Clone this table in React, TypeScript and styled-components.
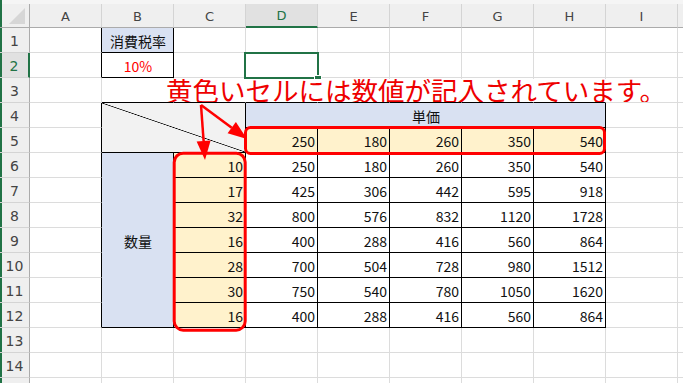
import React from 'react';
import styled, { createGlobalStyle } from 'styled-components';

const GlobalStyle = createGlobalStyle`
  html, body { margin: 0; padding: 0; background: #fff; overflow: hidden; }
  body { font-family: "Noto Sans CJK JP", "Noto Sans", sans-serif; }
  *, *::before, *::after { box-sizing: border-box; }
`;

const GREEN = '#217346';
const BLUE = '#d9e1f2';
const YELLOW = '#fff2cc';
const LIGHTGRAY = '#f2f2f2';
const GRIDLINE = '#dcdcdc';
const HEADER_BG = '#efefef';
const HEADER_ACTIVE_BG = '#e1e1e1';

const Sheet = styled.div`
  position: relative;
  width: 683px;
  height: 383px;
  overflow: hidden;
  background: #fff;
`;

const TopStrip = styled.div`
  height: 4px;
  background: #f5f5f5;
  box-shadow: inset 2px 0 0 ${GREEN};
`;

const Grid = styled.div`
  display: grid;
  grid-template-columns: 30px repeat(10, 72px);
  grid-template-rows: 24px repeat(15, 25px);
`;

const Corner = styled.div`
  display: flex;
  align-items: flex-end;
  justify-content: flex-end;
  padding: 0 4px 3px 0;
  background: ${HEADER_BG};
  border-right: 1px solid #ababab;
  border-bottom: 1px solid #ababab;
  box-shadow: inset 2px 0 0 ${GREEN};
`;

const CornerTriangle = styled.div`
  width: 16px;
  height: 16px;
  background: #d6d6d6;
  clip-path: polygon(100% 0, 100% 100%, 0 100%);
`;

const ColHeader = styled.div<{ $active?: boolean }>`
  display: flex;
  align-items: center;
  justify-content: center;
  padding-top: 1px;
  background: ${(p) => (p.$active ? HEADER_ACTIVE_BG : HEADER_BG)};
  border-right: 1px solid #d4d4d4;
  border-bottom: ${(p) => (p.$active ? `2px solid ${GREEN}` : '1px solid #ababab')};
  color: ${(p) => (p.$active ? GREEN : '#444')};
  font-family: "DejaVu Sans", "Noto Sans", sans-serif;
  font-size: 13px;
`;

const RowHeader = styled.div<{ $active?: boolean }>`
  display: flex;
  align-items: center;
  justify-content: center;
  padding-top: 1px;
  background: ${(p) => (p.$active ? HEADER_ACTIVE_BG : HEADER_BG)};
  border-right: ${(p) => (p.$active ? `2px solid ${GREEN}` : '1px solid #ababab')};
  border-bottom: 1px solid #d4d4d4;
  color: ${(p) => (p.$active ? GREEN : '#444')};
  box-shadow: inset 2px 0 0 ${GREEN};
  font-family: "DejaVu Sans", "Noto Sans", sans-serif;
  font-size: 14px;
`;

const Cell = styled.div<{
  $row: number;
  $col: number;
  $rs: number;
  $cs: number;
  $bg: string;
  $rb: string;
  $bb: string;
  $align: 'flex-start' | 'center' | 'flex-end';
  $color: string;
  $diag?: boolean;
}>`
  grid-row: ${(p) => `${p.$row} / span ${p.$rs}`};
  grid-column: ${(p) => `${p.$col} / span ${p.$cs}`};
  display: flex;
  align-items: center;
  justify-content: ${(p) => p.$align};
  padding: 2px 2px 0 3px;
  background: ${(p) =>
    p.$diag
      ? `linear-gradient(to top right, ${p.$bg} calc(50% - 0.7px), #000 50%, ${p.$bg} calc(50% + 0.7px))`
      : p.$bg};
  border-right: 1px solid ${(p) => p.$rb};
  border-bottom: 1px solid ${(p) => p.$bb};
  color: ${(p) => p.$color};
  font-family: "Noto Sans CJK JP", "Noto Sans", sans-serif;
  font-size: 14px;
  white-space: nowrap;
`;

const Callout = styled.div`
  position: absolute;
  left: 163px;
  top: 79px;
  width: 507px;
  height: 23px;
  padding-left: 3px;
  background: #fff;
  color: #ee0000;
  font-family: "Noto Sans CJK JP", sans-serif;
  font-size: 26.5px;
  line-height: 21px;
  white-space: nowrap;
  overflow: hidden;
`;

const Selection = styled.div`
  position: absolute;
  left: 244px;
  top: 52px;
  width: 75px;
  height: 27px;
  border: 2px solid ${GREEN};
`;

const FillHandle = styled.div`
  position: absolute;
  left: 69px;
  top: 22px;
  width: 6px;
  height: 6px;
  background: ${GREEN};
  box-shadow: 0 0 0 1px #fff;
`;

const Overlay = styled.svg`
  position: absolute;
  left: 0;
  top: 0;
  pointer-events: none;
`;

type Spec = {
  r: number;
  c: number;
  rs?: number;
  cs?: number;
  text?: string;
  bg?: string;
  align?: 'left' | 'center' | 'right';
  color?: string;
  diag?: boolean;
};

const COL_LETTERS = ['A', 'B', 'C', 'D', 'E', 'F', 'G', 'H', 'I', ''];
const ROWS = 15;
const COLS = 10;

const prices = [250, 180, 260, 350, 540];
const qty = [10, 17, 32, 16, 28, 30, 16];
const products = [
  [250, 180, 260, 350, 540],
  [425, 306, 442, 595, 918],
  [800, 576, 832, 1120, 1728],
  [400, 288, 416, 560, 864],
  [700, 504, 728, 980, 1512],
  [750, 540, 780, 1050, 1620],
  [400, 288, 416, 560, 864],
];

function buildSpecs(): Spec[] {
  const specs: Spec[] = [
    { r: 1, c: 2, text: '消費税率', bg: BLUE, align: 'center' },
    { r: 2, c: 2, text: '10%', align: 'center', color: '#ff0000' },
    { r: 4, c: 2, rs: 2, cs: 2, bg: LIGHTGRAY, diag: true },
    { r: 4, c: 4, cs: 5, text: '単価', bg: BLUE, align: 'center' },
    { r: 6, c: 2, rs: 7, text: '数量', bg: BLUE, align: 'center' },
  ];
  prices.forEach((p, i) => specs.push({ r: 5, c: 4 + i, text: String(p), bg: YELLOW, align: 'right' }));
  qty.forEach((q, i) => specs.push({ r: 6 + i, c: 3, text: String(q), bg: YELLOW, align: 'right' }));
  products.forEach((row, i) =>
    row.forEach((v, j) => specs.push({ r: 6 + i, c: 4 + j, text: String(v), align: 'right' }))
  );
  const covered = new Set<string>();
  specs.forEach((s) => {
    for (let r = s.r; r < s.r + (s.rs ?? 1); r++)
      for (let c = s.c; c < s.c + (s.cs ?? 1); c++) covered.add(`${r},${c}`);
  });
  for (let r = 1; r <= ROWS; r++)
    for (let c = 1; c <= COLS; c++) if (!covered.has(`${r},${c}`)) specs.push({ r, c });
  return specs;
}

const boxed = (r: number, c: number) =>
  (c === 2 && (r === 1 || r === 2)) || (r >= 4 && r <= 12 && c >= 2 && c <= 8);

const specs = buildSpecs();

const alignMap = { left: 'flex-start', center: 'center', right: 'flex-end' } as const;

function arrowHead(sx: number, sy: number, tx: number, ty: number, L: number, W: number) {
  const dx = tx - sx;
  const dy = ty - sy;
  const len = Math.hypot(dx, dy);
  const ux = dx / len;
  const uy = dy / len;
  const bx = tx - ux * L;
  const by = ty - uy * L;
  const px = -uy;
  const py = ux;
  return {
    base: [bx, by],
    points: `${tx},${ty} ${bx + px * W},${by + py * W} ${bx - px * W},${by - py * W}`,
  };
}

const Arrow: React.FC<{ sx: number; sy: number; tx: number; ty: number }> = ({ sx, sy, tx, ty }) => {
  const h = arrowHead(sx, sy, tx, ty, 19, 7);
  return (
    <g>
      <line x1={sx} y1={sy} x2={h.base[0]} y2={h.base[1]} stroke="#ff0000" strokeWidth={2.5} />
      <polygon points={h.points} fill="#ff0000" />
    </g>
  );
};

export default function App() {
  return (
    <Sheet>
      <GlobalStyle />
      <TopStrip />
      <Grid>
        <Corner>
          <CornerTriangle />
        </Corner>
        {COL_LETTERS.map((l, i) => (
          <ColHeader key={`ch${i}`} $active={l === 'D'}>
            {l}
          </ColHeader>
        ))}
        {Array.from({ length: ROWS }, (_, i) => (
          <RowHeader key={`rh${i}`} $active={i + 1 === 2} style={{ gridRow: i + 2, gridColumn: 1 }}>
            {i + 1 < ROWS ? i + 1 : ''}
          </RowHeader>
        ))}
        {specs.map((s) => {
          const rs = s.rs ?? 1;
          const cs = s.cs ?? 1;
          let rightBlack = false;
          for (let r = s.r; r < s.r + rs; r++)
            if (boxed(r, s.c + cs - 1) || boxed(r, s.c + cs)) rightBlack = true;
          let bottomBlack = false;
          for (let c = s.c; c < s.c + cs; c++)
            if (boxed(s.r + rs - 1, c) || boxed(s.r + rs, c)) bottomBlack = true;
          return (
            <Cell
              key={`${s.r},${s.c}`}
              $row={s.r + 1}
              $col={s.c + 1}
              $rs={rs}
              $cs={cs}
              $bg={s.bg ?? '#fff'}
              $rb={rightBlack ? '#000' : GRIDLINE}
              $bb={bottomBlack ? '#000' : GRIDLINE}
              $align={alignMap[s.align ?? 'left']}
              $color={s.color ?? '#111'}
              $diag={s.diag}
            >
              {s.text}
            </Cell>
          );
        })}
      </Grid>
      <Selection>
        <FillHandle />
      </Selection>
      <Callout>黄色いセルには数値が記入されています。</Callout>
      <Overlay width={683} height={383} viewBox="0 0 683 383">
        <rect x={245.5} y={127.5} width={359} height={26} rx={5} fill="none" stroke="#ff0000" strokeWidth={3} />
        <rect x={174.2} y={153.2} width={71} height={177} rx={9} fill="none" stroke="#ff0000" strokeWidth={3} />
        <Arrow sx={201} sy={105} tx={205} ty={160} />
        <Arrow sx={201} sy={105} tx={247} ty={139} />
      </Overlay>
    </Sheet>
  );
}
